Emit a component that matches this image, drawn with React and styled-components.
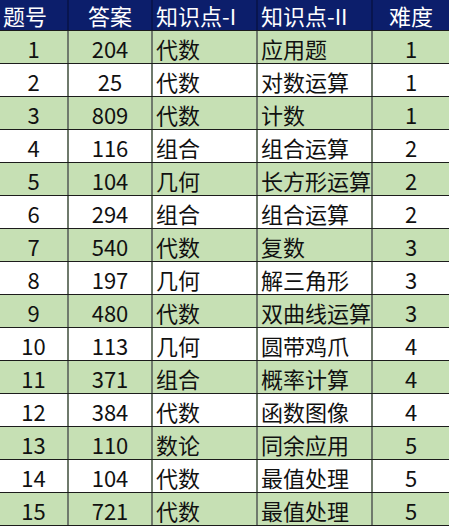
import React from 'react';
import styled, { createGlobalStyle } from 'styled-components';

const GlobalStyle = createGlobalStyle`
  html, body {
    margin: 0;
    padding: 0;
    background: #ffffff;
  }
  body {
    font-family: "Noto Sans CJK SC", "Noto Sans", sans-serif;
  }
`;

const rows = [
  [1, 204, '代数', '应用题', 1],
  [2, 25, '代数', '对数运算', 1],
  [3, 809, '代数', '计数', 1],
  [4, 116, '组合', '组合运算', 2],
  [5, 104, '几何', '长方形运算', 2],
  [6, 294, '组合', '组合运算', 2],
  [7, 540, '代数', '复数', 3],
  [8, 197, '几何', '解三角形', 3],
  [9, 480, '代数', '双曲线运算', 3],
  [10, 113, '几何', '圆带鸡爪', 4],
  [11, 371, '组合', '概率计算', 4],
  [12, 384, '代数', '函数图像', 4],
  [13, 110, '数论', '同余应用', 5],
  [14, 104, '代数', '最值处理', 5],
  [15, 721, '代数', '最值处理', 5],
];

const Sheet = styled.div`
  width: 449px;
  height: 526px;
  overflow: hidden;
`;

const Row = styled.div`
  display: grid;
  grid-template-columns: 69px 84px 105px 115px 76px;
  height: ${p => (p.$head ? '31px' : '33px')};
  box-sizing: border-box;
  border-bottom: 1px solid #1c1c1c;
  background: ${p => (p.$head ? '#0c1e6b' : p.$shade ? '#c6e0b4' : '#ffffff')};
  color: ${p => (p.$head ? '#ffffff' : '#111111')};
`;

const Cell = styled.div`
  box-sizing: border-box;
  display: flex;
  align-items: center;
  justify-content: ${p => (p.$left ? 'flex-start' : 'center')};
  padding-left: ${p => (p.$left ? '3px' : '0')};
  padding-top: ${p => (p.$head ? '0' : '2px')};
  border-right: ${p => (p.$last ? 'none' : p.$head ? '2px solid #08154f' : '2px solid #6f7a6c')};
  font-size: 22px;
  line-height: 1;
  white-space: nowrap;
  overflow: hidden;
`;

export default function App() {
  return (
    <>
      <GlobalStyle />
      <Sheet>
        <Row $head>
          <Cell $head $left>题号</Cell>
          <Cell $head>答案</Cell>
          <Cell $head $left>知识点-I</Cell>
          <Cell $head $left>知识点-II</Cell>
          <Cell $head $last>难度</Cell>
        </Row>
        {rows.map((r, i) => (
          <Row key={r[0]} $shade={i % 2 === 0}>
            <Cell>{r[0]}</Cell>
            <Cell>{r[1]}</Cell>
            <Cell $left>{r[2]}</Cell>
            <Cell $left>{r[3]}</Cell>
            <Cell $last>{r[4]}</Cell>
          </Row>
        ))}
      </Sheet>
    </>
  );
}
